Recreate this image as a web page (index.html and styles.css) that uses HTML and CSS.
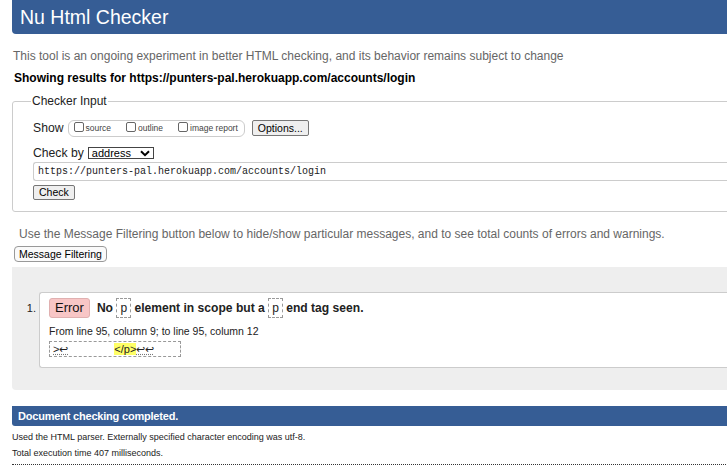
FILE: index.html
```html
<!DOCTYPE html>
<html>
<head>
<meta charset="utf-8">
<link rel="stylesheet" href="styles.css">
</head>
<body>
<div class="page">
  <h1 class="title">Nu Html Checker</h1>
  <p class="intro">This tool is an ongoing experiment in better HTML checking, and its behavior remains subject to change</p>
  <p class="showing">Showing results for https://punters-pal.herokuapp.com/accounts/login</p>
  <fieldset class="checker">
    <legend>Checker Input</legend>
    <div class="row show-row">
      <span class="lbl">Show</span>
      <span class="opts">
        <label class="opt"><span class="cb"></span>source</label>
        <label class="opt"><span class="cb"></span>outline</label>
        <label class="opt"><span class="cb"></span>image report</label>
      </span>
      <span class="btn">Options...</span>
    </div>
    <div class="row checkby-row">
      <span class="lbl">Check by</span>
      <span class="select">address<svg class="chev" width="10" height="7" viewBox="0 0 10 7"><path d="M1 1.2 L5 5.2 L9 1.2" fill="none" stroke="#000" stroke-width="2"/></svg></span>
    </div>
    <div class="url">https://punters-pal.herokuapp.com/accounts/login</div>
    <span class="btn check-btn">Check</span>
  </fieldset>
  <p class="filter-note">Use the Message Filtering button below to hide/show particular messages, and to see total counts of errors and warnings.</p>
  <span class="btn filter-btn">Message Filtering</span>
  <div class="results">
    <ol class="msgs">
      <li class="msg">
        <p class="msg-head"><span class="badge">Error</span><span class="msg-text">No <code>p</code> element in scope but a <code>p</code> end tag seen.</span></p>
        <p class="loc">From line 95, column 9; to line 95, column 12</p>
        <p class="extract"><span class="ws">&gt;↩</span>               <b class="hl">&lt;/p&gt;</b><span class="ws">↩↩</span></p>
      </li>
    </ol>
  </div>
  <h2 class="done">Document checking completed.</h2>
  <p class="meta">Used the HTML parser. Externally specified character encoding was utf-8.</p>
  <p class="meta">Total execution time 407 milliseconds.</p>
  <div class="dots"></div>
</div>
</body>
</html>
```
FILE: styles.css
```css
html, body {
  margin: 0;
  padding: 0;
  overflow: hidden;
}
body {
  font-family: "Liberation Sans", Arial, sans-serif;
  color: #000;
  background: #fff;
}
.page {
  width: 760px;
  padding-left: 12px;
}
.title {
  margin: 0;
  height: 34px;
  background: #365d95;
  color: #fff;
  font-weight: normal;
  font-size: 19.5px;
  line-height: 34px;
  padding-left: 8px;
  border-radius: 0 0 0 4px;
}
.intro {
  margin: 14px 0 0 1px;
  font-size: 12px;
  color: #666;
  line-height: 16px;
}
.showing {
  margin: 6px 0 0 2px;
  font-size: 12px;
  font-weight: bold;
  line-height: 16px;
}
.checker {
  margin: 8px 0 0 0;
  border: 1px solid #ccc;
  border-radius: 3px;
  padding: 4px 0 11px 20px;
}
.checker legend {
  font-size: 12px;
  padding: 0 1px;
  margin-left: -2px;
  color: #222;
}
.row {
  display: flex;
  align-items: center;
}
.show-row {
  margin-top: 7px;
  height: 18px;
}
.lbl {
  font-size: 12.2px;
  color: #222;
}
.opts {
  display: inline-flex;
  align-items: center;
  margin-left: 4px;
  border: 1px solid #ccc;
  border-radius: 6px;
  height: 15px;
  padding: 0 6px 0 5px;
}
.opt {
  display: inline-flex;
  align-items: center;
  font-size: 8.5px;
  color: #444;
  margin-right: 15px;
}
.opt:last-child { margin-right: 0; }
.cb {
  width: 8px;
  height: 8px;
  border: 1px solid #666;
  border-radius: 2px;
  margin-right: 2px;
  position: relative;
  top: -1px;
}
.btn {
  display: inline-block;
  font-size: 11px;
  line-height: 13px;
  padding: 0 5px;
  border: 1px solid #767676;
  background: #efefef;
  border-radius: 2px;
  color: #000;
}
.show-row .btn {
  margin-left: 7px;
  padding: 0 5px;
  height: 14px;
  line-height: 14px;
  font-size: 10.5px;
}
.checkby-row {
  margin-top: 8px;
  height: 16px;
}
.select {
  display: inline-flex;
  align-items: center;
  justify-content: space-between;
  margin-left: 4px;
  width: 58px;
  height: 10px;
  border: 1px solid #444;
  font-size: 11px;
  line-height: 10px;
  padding: 0 3px 0 3px;
  box-sizing: content-box;
}
.chev { display: block; }
.url {
  margin-top: 1px;
  height: 17px;
  border: 1px solid #ccc;
  border-right: none;
  border-radius: 3px 0 0 3px;
  font-family: "Liberation Mono", "DejaVu Sans Mono", monospace;
  font-size: 10px;
  line-height: 17px;
  padding-left: 4px;
  color: #222;
}
.check-btn {
  margin-top: 4px;
  padding: 0 5px;
  height: 13px;
  line-height: 13px;
  font-size: 10.5px;
}
.filter-note {
  margin: 14px 0 0 7px;
  font-size: 12px;
  color: #666;
  line-height: 16px;
}
.filter-btn {
  margin: 4px 0 0 2px;
  height: 14px;
  line-height: 14px;
  font-size: 10.5px;
  border-color: #999;
  border-radius: 4px;
  background: #fafafa;
  padding: 0 4px;
}
.results {
  margin-top: 5px;
  background: #eee;
  border-radius: 0 0 0 4px;
  padding: 25px 0 22px 0;
}
.msgs {
  margin: 0;
  padding-left: 27px;
  font-size: 11px;
  color: #822;
}
.msg {
  background: #fff;
  border: 1px solid #ccc;
  border-right: none;
  border-radius: 3px 0 0 3px;
  padding: 4px 0 10px 9px;
  color: #222;
}
.msg p { margin: 0; }
.msg-head {
  display: flex;
  align-items: center;
  font-size: 12.1px;
  font-weight: bold;
  height: 21px;
}
.badge {
  background: #f8c6c6;
  border: 1px solid #e0b0b0;
  border-radius: 3px;
  font-weight: normal;
  font-size: 13px;
  padding: 0 5px;
  height: 18px;
  line-height: 18px;
  margin-right: 7px;
  color: #111;
}
.msg-text code {
  display: inline-block;
  font-family: "Liberation Sans", Arial, sans-serif;
  font-weight: normal;
  border: 1px dashed #999;
  padding: 0 3px;
  height: 18px;
  line-height: 18px;
  vertical-align: baseline;
  font-size: 12px;
}
.loc {
  margin-top: 6px !important;
  font-size: 10.5px;
  line-height: 14px;
}
.extract {
  margin-top: 3px !important;
  display: inline-block;
  border: 1px dashed #999;
  width: 124px;
  height: 14px;
  line-height: 14px;
  padding: 0 3px;
  font-size: 11px;
  white-space: pre;
  font-family: "Liberation Sans", Arial, sans-serif;
}
.ws {
  text-decoration: underline dotted #777;
}
.hl {
  background: #ff6;
  font-weight: normal;
}
.done {
  margin: 16px 0 0 0;
  background: #365d95;
  color: #fff;
  font-size: 11px;
  letter-spacing: -0.2px;
  font-weight: bold;
  height: 20px;
  line-height: 20px;
  padding-left: 6px;
  border-radius: 0 0 0 3px;
}
.meta {
  margin: 6px 0 0 0;
  font-size: 9px;
  line-height: 11px;
  color: #222;
}
.meta + .meta { margin-top: 5px; }
.dots {
  margin-top: 5px;
  border-top: 1px dotted #333;
}
```
